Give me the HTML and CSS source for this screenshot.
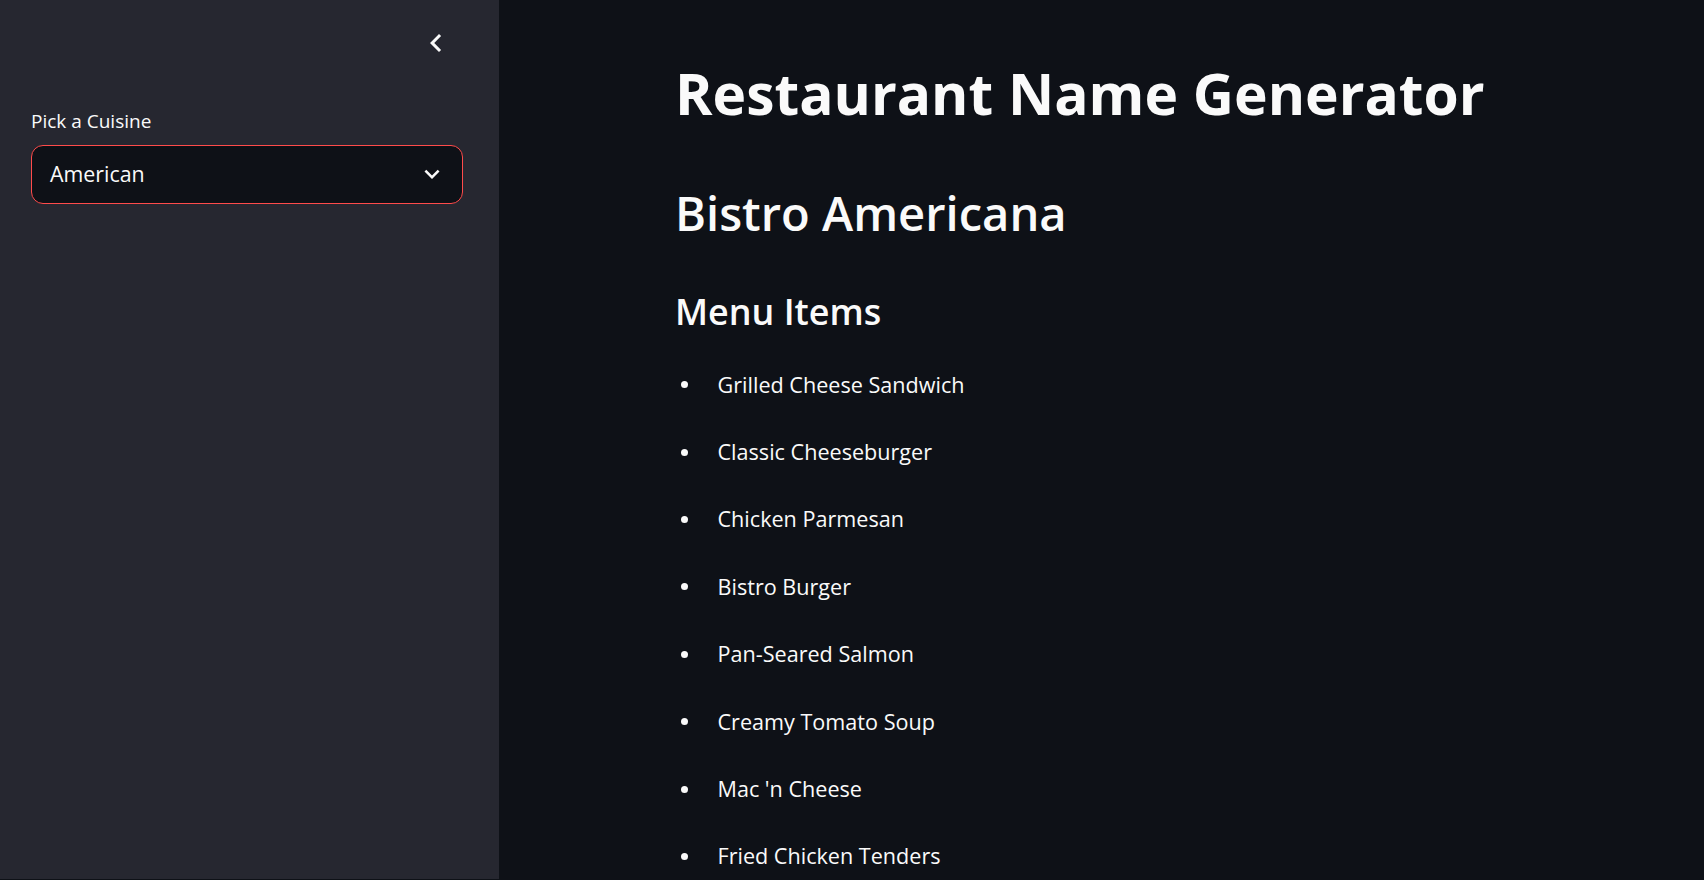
FILE: index.html
```html
<!DOCTYPE html>
<html lang="en">
<head>
<meta charset="utf-8">
<title>Restaurant Name Generator</title>
<link rel="stylesheet" href="styles.css">
</head>
<body>
<div class="app">
  <aside class="sidebar">
    <div class="sidebar-header">
      <button class="collapse-btn" aria-label="Collapse sidebar">
        <svg viewBox="0 0 24 24" width="36" height="36"><path d="M15.41 7.41L14 6l-6 6 6 6 1.41-1.41L10.83 12z" fill="#fafafa"/></svg>
      </button>
    </div>
    <label class="field-label">Pick a Cuisine</label>
    <div class="select">
      <span class="select-value">American</span>
      <svg class="select-chevron" viewBox="0 0 24 24" width="30" height="30"><path d="M16.59 8.59L12 13.17 7.41 8.59 6 10l6 6 6-6z" fill="#fafafa"/></svg>
    </div>
  </aside>
  <main class="main">
    <h1 class="title">Restaurant Name Generator</h1>
    <h2 class="restaurant">Bistro Americana</h2>
    <h3 class="section">Menu Items</h3>
    <ul class="menu">
      <li>Grilled Cheese Sandwich</li>
      <li>Classic Cheeseburger</li>
      <li>Chicken Parmesan</li>
      <li>Bistro Burger</li>
      <li>Pan-Seared Salmon</li>
      <li>Creamy Tomato Soup</li>
      <li>Mac 'n Cheese</li>
      <li>Fried Chicken Tenders</li>
    </ul>
  </main>
</div>
</body>
</html>
```
FILE: styles.css
```css
html, body {
  margin: 0;
  padding: 0;
  height: 100%;
  background: #0e1117;
}
body {
  font-family: "Open Sans", "Noto Sans", sans-serif;
  color: #fafafa;
  overflow: hidden;
}
.app {
  display: flex;
  height: 100vh;
}
.sidebar {
  width: 499px;
  flex: 0 0 499px;
  height: calc(100vh - 1px);
  background: #262730;
  box-sizing: border-box;
  padding: 0 36px 0 31px;
  display: flex;
  flex-direction: column;
}
.sidebar-header {
  height: 86px;
  display: flex;
  justify-content: flex-end;
  align-items: center;
}
.collapse-btn {
  width: 36px;
  height: 36px;
  padding: 0;
  margin: 0 9px 0 0;
  border: 0;
  background: transparent;
  display: flex;
  align-items: center;
  justify-content: center;
}
.collapse-btn svg {
  display: block;
}
.field-label {
  display: block;
  margin-top: 22.6px;
  font-size: 19px;
  line-height: 24px;
  color: #fafafa;
}
.select {
  margin-top: 12.4px;
  height: 59px;
  box-sizing: border-box;
  border: 1px solid #ff4b4b;
  border-radius: 12px;
  background: #0e1117;
  display: flex;
  align-items: center;
  justify-content: space-between;
  padding: 0 15.5px 0 18px;
}
.select-value {
  font-size: 21.4px;
  line-height: 28.9px;
}
.select-chevron {
  display: block;
}
.main {
  flex: 1;
  box-sizing: border-box;
  padding: 59.7px 0 0 176px;
  overflow: hidden;
}
.title {
  margin: 0;
  font-size: 56.9px;
  line-height: 67.2px;
  font-weight: 700;
  letter-spacing: 0;
}
.restaurant {
  margin: 57.8px 0 0;
  font-size: 47.1px;
  line-height: 56.2px;
  font-weight: 600;
}
.section {
  margin: 50px 0 0;
  font-size: 35.9px;
  line-height: 42.6px;
  font-weight: 600;
}
.menu {
  list-style: none;
  margin: 33.2px 0 0;
  padding: 0;
}
.menu li {
  display: flex;
  align-items: center;
  font-size: 21.6px;
  line-height: 36px;
  margin-bottom: 31.4px;
}
.menu li::before {
  content: "";
  width: 7px;
  height: 7px;
  border-radius: 50%;
  background: #fafafa;
  margin: 0 30px 0 5.5px;
  flex: 0 0 7px;
}
```
